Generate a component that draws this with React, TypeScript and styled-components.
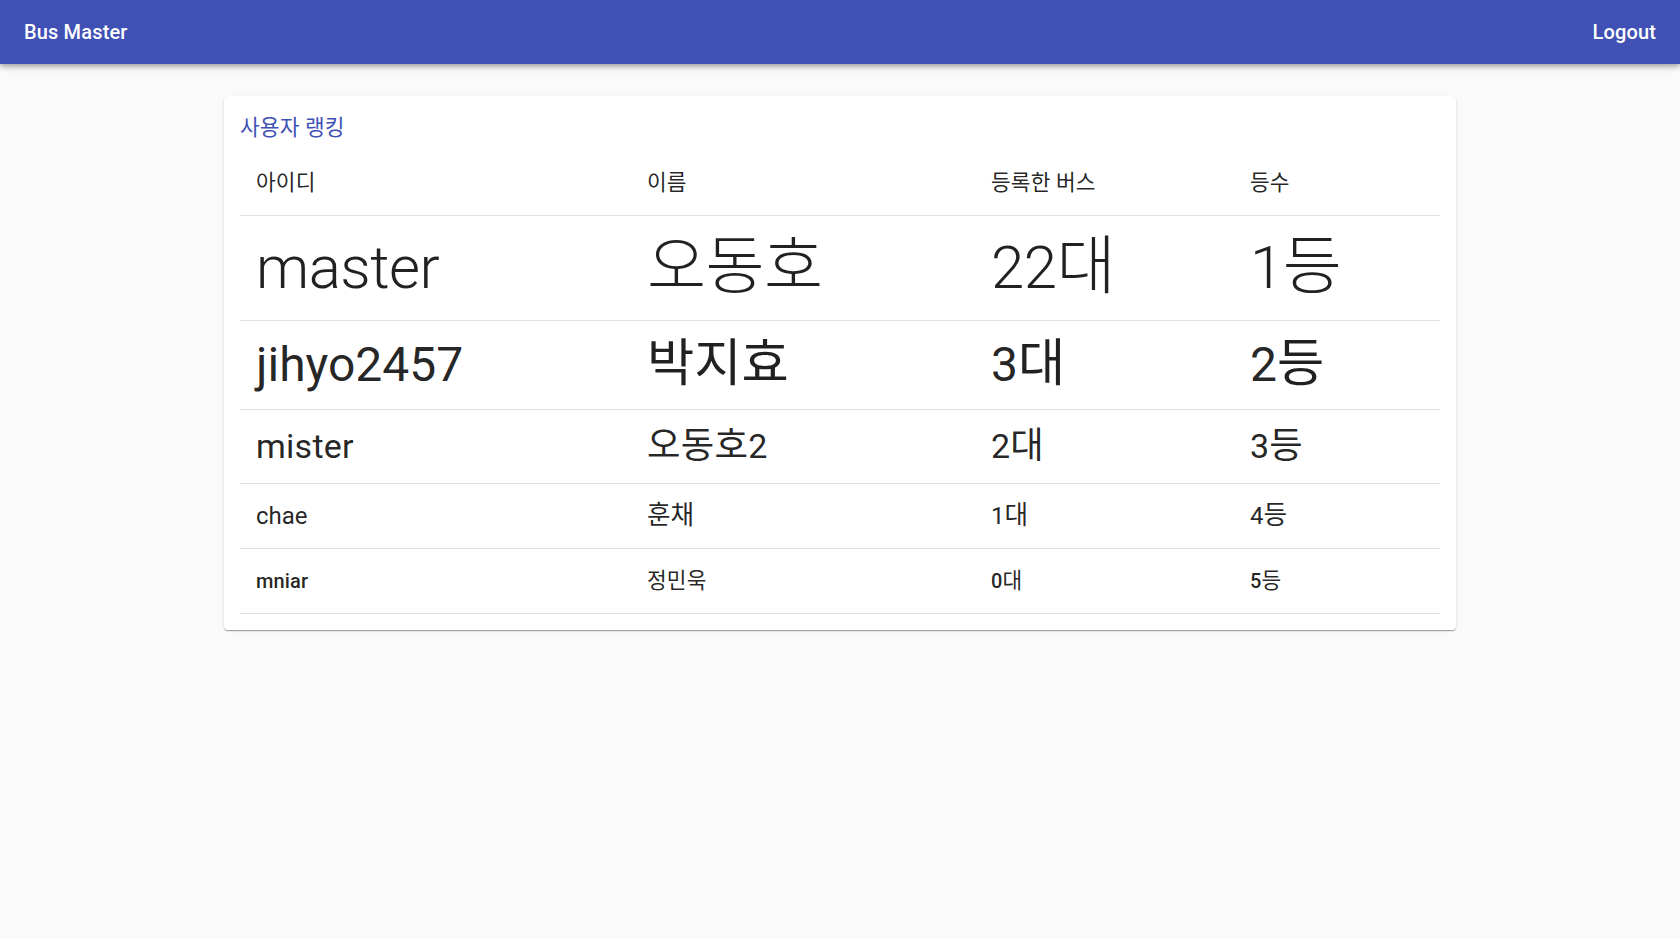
import React from "react";
import styled, { createGlobalStyle } from "styled-components";

const GlobalStyle = createGlobalStyle`
  html, body {
    margin: 0;
    padding: 0;
    background: #fafafa;
  }
  body {
    font-family: Roboto, "Noto Sans CJK KR", "Noto Sans", sans-serif;
    color: rgba(0, 0, 0, 0.87);
    -webkit-font-smoothing: antialiased;
  }
  * { box-sizing: border-box; }
`;

type Variant = "h2" | "h3" | "h4" | "h5" | "h6";

const variants: Record<Variant, { size: number; line: number; weight: number; ls: string }> = {
  h2: { size: 60, line: 72, weight: 300, ls: "-0.00833em" },
  h3: { size: 48, line: 56, weight: 400, ls: "0em" },
  h4: { size: 34, line: 41, weight: 400, ls: "0.00735em" },
  h5: { size: 24, line: 32, weight: 400, ls: "0em" },
  h6: { size: 20, line: 32, weight: 500, ls: "0.0075em" },
};

const Page = styled.div`
  min-height: 100vh;
  display: flex;
  flex-direction: column;
`;

const AppBar = styled.header`
  position: relative;
  z-index: 2;
  height: 64px;
  padding: 0 24px;
  display: flex;
  align-items: center;
  justify-content: space-between;
  background: #3f51b5;
  color: #fff;
  box-shadow: 0px 2px 4px -1px rgba(0, 0, 0, 0.2), 0px 4px 5px 0px rgba(0, 0, 0, 0.14),
    0px 1px 10px 0px rgba(0, 0, 0, 0.12);
`;

const BarText = styled.div`
  font-size: 20px;
  line-height: 32px;
  font-weight: 500;
  letter-spacing: 0.0075em;
`;

const Container = styled.main`
  width: 100%;
  max-width: 1280px;
  margin: 32px auto 0;
  padding: 0 24px;
`;

const Paper = styled.section`
  background: #fff;
  border-radius: 4px;
  padding: 16px;
  box-shadow: 0px 2px 1px -1px rgba(0, 0, 0, 0.2), 0px 1px 1px 0px rgba(0, 0, 0, 0.14),
    0px 1px 3px 0px rgba(0, 0, 0, 0.12);
`;

const Title = styled.h2`
  margin: 0 0 7px;
  height: 32px;
  font-size: 20px;
  line-height: 32px;
  font-weight: 400;
  letter-spacing: 0.0075em;
  color: #3f51b5;
  white-space: nowrap;
`;

const Table = styled.table`
  width: 100%;
  border-collapse: collapse;
  border-spacing: 0;
  table-layout: fixed;
`;

const HeadCell = styled.th`
  padding: 16px;
  text-align: left;
  font-size: 20px;
  line-height: 32px;
  font-weight: 400;
  letter-spacing: 0.0075em;
  color: rgba(0, 0, 0, 0.87);
  border-bottom: 1px solid rgb(224, 224, 224);
  white-space: nowrap;
`;

const HeadText = styled.div`
  height: 32px;
`;

const Cell = styled.td`
  padding: 16px;
  text-align: left;
  vertical-align: middle;
  border-bottom: 1px solid rgb(224, 224, 224);
  color: rgba(0, 0, 0, 0.87);
`;

const CellText = styled.div<{ $v: Variant }>`
  margin: 0;
  white-space: nowrap;
  height: ${(p) => variants[p.$v].line}px;
  font-size: ${(p) => variants[p.$v].size}px;
  line-height: ${(p) => variants[p.$v].line}px;
  font-weight: ${(p) => variants[p.$v].weight};
  letter-spacing: ${(p) => variants[p.$v].ls};
`;

const Hangul = styled.span<{ $w: number }>`
  font-size: 1.07em;
  line-height: 1;
  font-weight: ${(p) => p.$w};
`;

const rows: { id: string; name: string; buses: string; rank: string; v: Variant }[] = [
  { id: "master", name: "오동호", buses: "22대", rank: "1등", v: "h2" },
  { id: "jihyo2457", name: "박지효", buses: "3대", rank: "2등", v: "h3" },
  { id: "mister", name: "오동호2", buses: "2대", rank: "3등", v: "h4" },
  { id: "chae", name: "훈채", buses: "1대", rank: "4등", v: "h5" },
  { id: "mniar", name: "정민욱", buses: "0대", rank: "5등", v: "h6" },
];

const columns = [
  { label: "아이디", width: 391 },
  { label: "이름", width: 344 },
  { label: "등록한 버스", width: 259 },
  { label: "등수", width: 206 },
];

function Mixed({ text, weight }: { text: string; weight: number }) {
  const koWeight = weight > 400 ? 400 : weight;
  const parts = text.split(/([\uAC00-\uD7A3\s]+)/).filter((s) => s.length > 0);
  return (
    <>
      {parts.map((part, i) =>
        /[\uAC00-\uD7A3]/.test(part) ? (
          <Hangul key={i} $w={koWeight}>
            {part}
          </Hangul>
        ) : (
          <React.Fragment key={i}>{part}</React.Fragment>
        )
      )}
    </>
  );
}

export default function App() {
  return (
    <Page>
      <GlobalStyle />
      <AppBar>
        <BarText>Bus Master</BarText>
        <BarText>Logout</BarText>
      </AppBar>
      <Container>
        <Paper>
          <Title>
            <Mixed text="사용자 랭킹" weight={400} />
          </Title>
          <Table>
            <colgroup>
              {columns.map((c) => (
                <col key={c.label} style={{ width: c.width }} />
              ))}
            </colgroup>
            <thead>
              <tr>
                {columns.map((c) => (
                  <HeadCell key={c.label}>
                    <HeadText>
                      <Mixed text={c.label} weight={400} />
                    </HeadText>
                  </HeadCell>
                ))}
              </tr>
            </thead>
            <tbody>
              {rows.map((r) => {
                const w = variants[r.v].weight;
                return (
                  <tr key={r.id}>
                    {[r.id, r.name, r.buses, r.rank].map((val, i) => (
                      <Cell key={i}>
                        <CellText $v={r.v}>
                          <Mixed text={val} weight={w} />
                        </CellText>
                      </Cell>
                    ))}
                  </tr>
                );
              })}
            </tbody>
          </Table>
        </Paper>
      </Container>
    </Page>
  );
}
